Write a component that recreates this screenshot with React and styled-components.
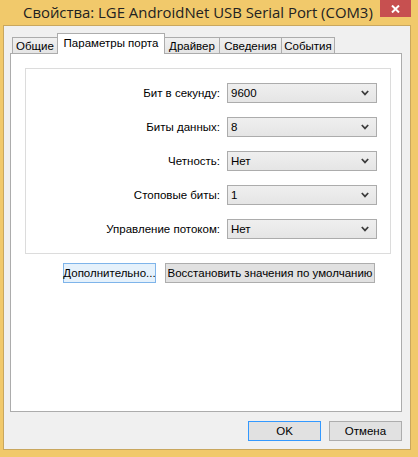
import React from "react";
import styled, { createGlobalStyle } from "styled-components";

const Global = createGlobalStyle`
  html, body { margin: 0; padding: 0; background: #F1C96B; }
  body { font-family: "Liberation Sans", Arial, sans-serif; }
  * { box-sizing: border-box; }
`;

const Window = styled.div`
  width: 418px;
  height: 457px;
  background: #F1C96B;
  display: flex;
  flex-direction: column;
`;

const TitleBar = styled.div`
  height: 25px;
  display: flex;
  align-items: flex-start;
  justify-content: space-between;
  padding-left: 23px;
  padding-right: 7px;
`;

const Title = styled.div`
  font-family: "Open Sans", "Noto Sans", sans-serif;
  font-size: 14.9px;
  line-height: 25px;
  color: #222;
  white-space: nowrap;
`;

const CloseButton = styled.div`
  width: 31px;
  height: 17px;
  background: #C75050;
  display: flex;
  align-items: center;
  justify-content: center;
`;

const Client = styled.div`
  flex: 1;
  margin: 0 7px 7px 3px;
  border: 1px solid #C9A75E;
  background: #F0F0F0;
  display: flex;
  flex-direction: column;
  padding: 7px 8px 8px 6px;
`;

const TabStrip = styled.div`
  display: flex;
  align-items: flex-end;
  height: 20px;
  padding-left: 2px;
  position: relative;
  z-index: 1;
`;

const Tab = styled.div`
  width: ${(p) => p.$w}px;
  height: ${(p) => (p.$active ? 21 : 16)}px;
  margin-bottom: ${(p) => (p.$active ? -1 : 0)}px;
  border: 1px solid #ACACAC;
  border-bottom: none;
  margin-left: ${(p) => (p.$first ? 0 : -1)}px;
  background: ${(p) =>
    p.$active ? "#FFFFFF" : "linear-gradient(#F0F0F0, #E5E5E5)"};
  font-size: 11.5px;
  color: #000;
  display: flex;
  justify-content: center;
  align-items: ${(p) => (p.$active ? "flex-start" : "center")};
  padding-top: ${(p) => (p.$active ? 3 : 0)}px;
  white-space: nowrap;
  position: relative;
  z-index: ${(p) => (p.$active ? 2 : 1)};
`;

const Panel = styled.div`
  flex: 1;
  background: #FFFFFF;
  border: 1px solid #ACACAC;
  padding: 14px 10px 0 14px;
  display: flex;
  flex-direction: column;
`;

const Group = styled.div`
  border: 1px solid #DCDCDC;
  height: 186px;
  padding: 14px 13px 0 0;
  display: grid;
  grid-template-columns: 1fr 150px;
  grid-auto-rows: 20px;
  column-gap: 7px;
  row-gap: 14px;
  align-content: start;
`;

const Label = styled.div`
  font-size: 11.5px;
  color: #000;
  text-align: right;
  align-self: center;
  white-space: nowrap;
`;

const Select = styled.div`
  height: 20px;
  border: 1px solid #ACACAC;
  background: linear-gradient(#EFEFEF, #E5E5E5);
  display: flex;
  align-items: center;
  justify-content: space-between;
  padding: 0 7px 0 3px;
  font-size: 11.5px;
  color: #000;
`;

const ButtonRow = styled.div`
  display: flex;
  gap: ${(p) => p.$gap}px;
  justify-content: ${(p) => (p.$end ? "flex-end" : "flex-start")};
  padding-left: ${(p) => p.$pl || 0}px;
  margin-top: 9px;
`;

const Button = styled.div`
  width: ${(p) => p.$w}px;
  height: 20px;
  border: 1px solid
    ${(p) => (p.$variant === "default" ? "#3399FF" : p.$variant === "hover" ? "#7EB4EA" : "#ADADAD")};
  background: ${(p) => (p.$variant === "hover" ? "#E5F1FB" : "#E1E1E1")};
  font-size: 11.5px;
  color: #000;
  display: flex;
  align-items: center;
  justify-content: center;
  white-space: nowrap;
`;

const Chevron = () => (
  <svg width="8" height="6" viewBox="0 0 8 6">
    <polyline points="0.8,1 4,4.4 7.2,1" fill="none" stroke="#3C3C3C" strokeWidth="1.7" />
  </svg>
);

const fields = [
  ["Бит в секунду:", "9600"],
  ["Биты данных:", "8"],
  ["Четность:", "Нет"],
  ["Стоповые биты:", "1"],
  ["Управление потоком:", "Нет"],
];

const tabs = [
  ["Общие", 46],
  ["Параметры порта", 108],
  ["Драйвер", 56],
  ["Сведения", 63],
  ["События", 54],
];

export default function App() {
  return (
    <>
      <Global />
      <Window>
        <TitleBar>
          <Title>Свойства: LGE AndroidNet USB Serial Port (COM3)</Title>
          <CloseButton>
            <svg width="9" height="8" viewBox="0 0 9 8">
              <path d="M1 0.5 L8 7.5 M8 0.5 L1 7.5" stroke="#FFFFFF" strokeWidth="2" />
            </svg>
          </CloseButton>
        </TitleBar>
        <Client>
          <TabStrip>
            {tabs.map(([t, w], i) => (
              <Tab key={t} $w={w} $first={i === 0} $active={i === 1}>
                {t}
              </Tab>
            ))}
          </TabStrip>
          <Panel>
            <Group>
              {fields.map(([l, v]) => (
                <React.Fragment key={l}>
                  <Label>{l}</Label>
                  <Select>
                    <span>{v}</span>
                    <Chevron />
                  </Select>
                </React.Fragment>
              ))}
            </Group>
            <ButtonRow $gap={9} $pl={38}>
              <Button $w={93} $variant="hover">Дополнительно...</Button>
              <Button $w={210}>Восстановить значения по умолчанию</Button>
            </ButtonRow>
          </Panel>
          <ButtonRow $gap={8} $end>
            <Button $w={73} $variant="default">OK</Button>
            <Button $w={73}>Отмена</Button>
          </ButtonRow>
        </Client>
      </Window>
    </>
  );
}
